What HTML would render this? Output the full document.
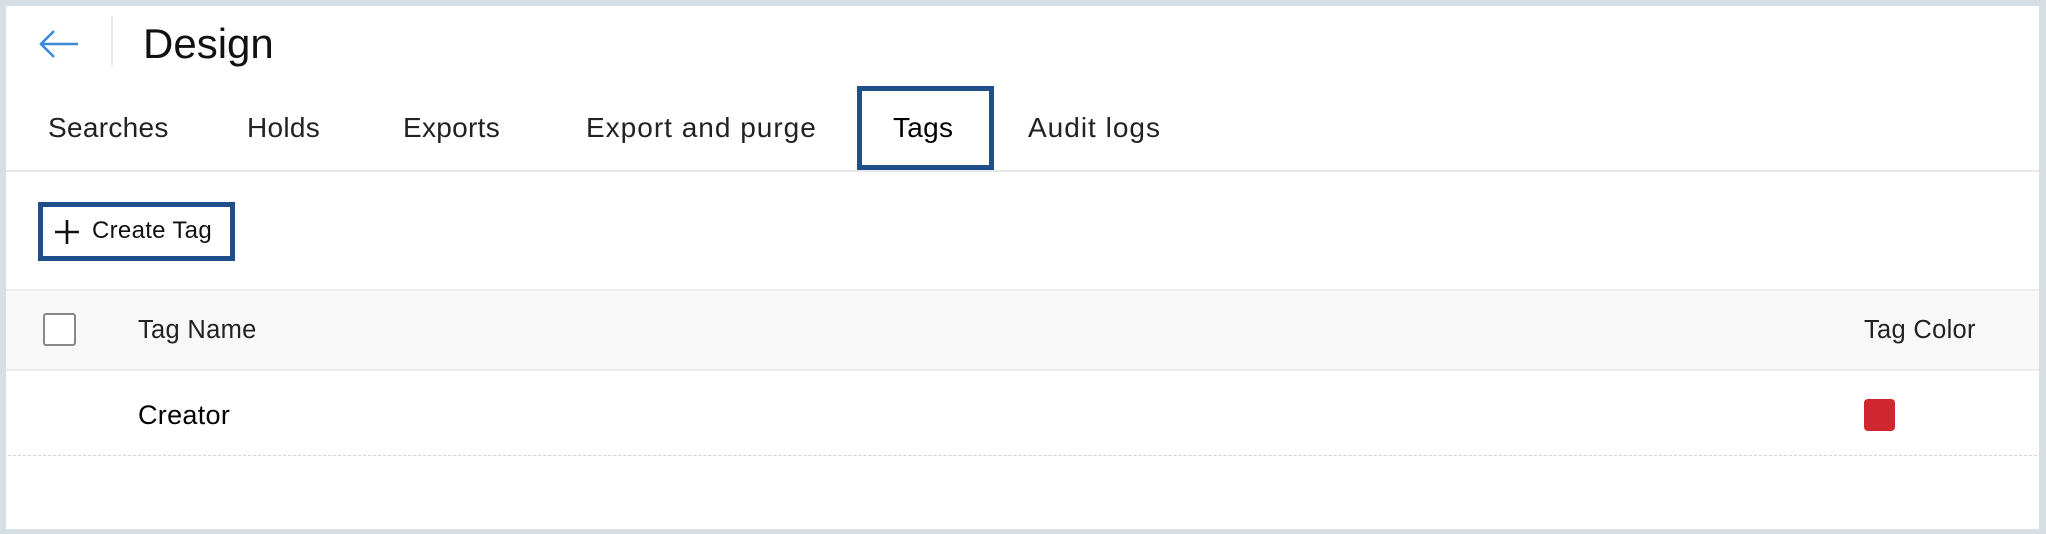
<!DOCTYPE html>
<html><head><style>
html,body{margin:0;padding:0}
body{width:2046px;height:534px;background:#d6dfe3;position:relative;font-family:"Liberation Sans",sans-serif;color:#111;overflow:hidden}
.main{position:absolute;left:6px;top:6px;width:2033px;height:523px;background:#fff}
.a{position:absolute;white-space:nowrap}
.tab{position:absolute;top:111px;font-size:28px;color:#222;line-height:34px;letter-spacing:0.3px}
</style></head><body>
<div class="main"></div>
<svg class="a" style="left:38px;top:28px" width="42" height="32" viewBox="0 0 42 32"><path d="M40 16H4M16 3L3 16L16 29" fill="none" stroke="#3d8ad9" stroke-width="2.6"/></svg>
<div class="a" style="left:111px;top:16px;width:2px;height:50px;background:#ececec"></div>
<div class="a" style="left:143px;top:19px;font-size:42px;line-height:50px">Design</div>
<div class="tab" style="left:48px">Searches</div>
<div class="tab" style="left:247px">Holds</div>
<div class="tab" style="left:403px">Exports</div>
<div class="tab" style="left:586px;letter-spacing:1px">Export and purge</div>
<div class="a" style="left:857px;top:86px;width:127px;height:74px;border:5px solid #1f4f8a"></div>
<div class="tab" style="left:893px;color:#000">Tags</div>
<div class="tab" style="left:1028px;letter-spacing:1px">Audit logs</div>
<div class="a" style="left:6px;top:170px;width:2033px;height:2px;background:#e8e8e8"></div>
<div class="a" style="left:38px;top:202px;width:187px;height:49px;border:5px solid #1f4f8a"></div>
<svg class="a" style="left:54px;top:219px" width="26" height="26"><path d="M13 1V25M1 13H25" stroke="#111" stroke-width="2.6"/></svg>
<div class="a" style="left:92px;top:216px;font-size:24px;line-height:30px;letter-spacing:0.3px">Create Tag</div>
<div class="a" style="left:6px;top:289px;width:2033px;height:78px;background:#f8f8f8;border-top:2px solid #ececec;border-bottom:2px solid #ececec"></div>
<div class="a" style="left:43px;top:313px;width:29px;height:29px;border:2px solid #888;border-radius:3px;background:#fff"></div>
<div class="a" style="left:138px;top:314px;font-size:25.5px;line-height:32px;color:#222;letter-spacing:0.3px">Tag Name</div>
<div class="a" style="left:1864px;top:314px;font-size:25.5px;line-height:32px;color:#222;letter-spacing:0.3px">Tag Color</div>
<div class="a" style="left:138px;top:399px;font-size:27px;line-height:32px;color:#000;letter-spacing:0.3px">Creator</div>
<div class="a" style="left:1864px;top:399px;width:31px;height:32px;background:#d0262f;border-radius:4px"></div>
<div class="a" style="left:8px;top:455px;width:2029px;border-top:1px dashed #d4d4d4"></div>
</body></html>
